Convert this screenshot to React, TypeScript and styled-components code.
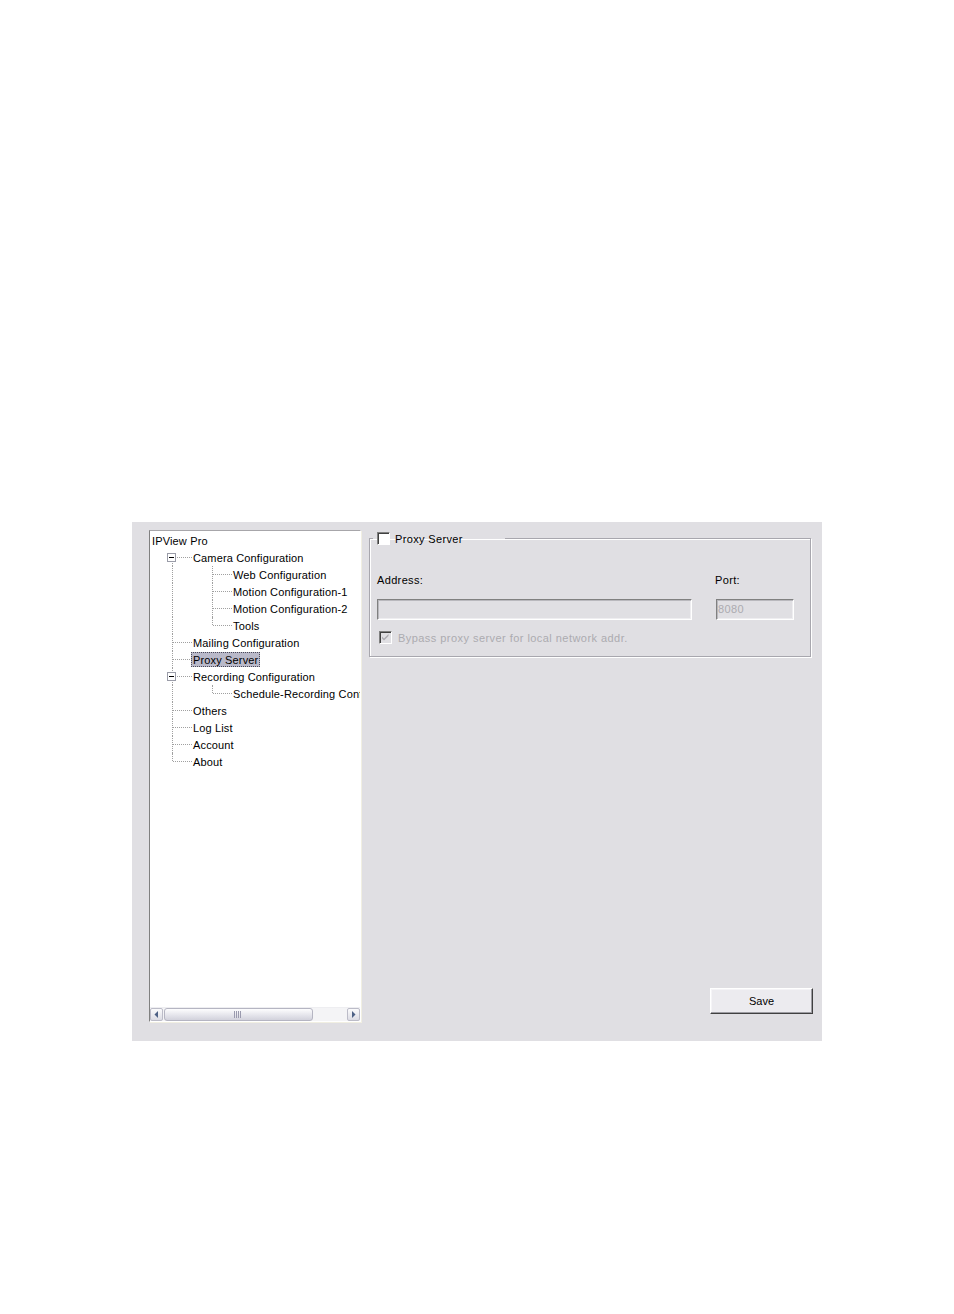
import React, { ReactElement } from 'react'
import styled, { createGlobalStyle, css } from 'styled-components';

const GlobalStyle = createGlobalStyle`
    html, body {
        margin : 0;
        padding : 0;
        background-color : #ffffff;
    }
    body {
        font-family : "Liberation Sans", Arial, sans-serif;
        font-size : 11px;
        color : #000000;
    }
`;

const StyledPage = styled.div ` 
    width : 954px;
    height : 1314px;
    padding-top : 522px;
    padding-left : 132px;
    box-sizing : border-box;
`;

const StyledPanel = styled.div ` 
    display : flex;
    flex-direction : row;
    gap : 8px;
    width : 690px;
    height : 519px;
    box-sizing : border-box;
    padding : 8px 10px 19px 17px;
    background-color : #e0dfe3;
`;

/* ---------- tree ---------- */

const StyledTreeBox = styled.div ` 
    display : flex;
    flex-direction : column;
    width : 212px;
    height : 492px;
    box-sizing : border-box;
    background-color : #ffffff;
    border-top : 1px solid #a7a6aa;
    border-left : 1px solid #808080;
    border-right : 1px solid #ffffff;
    border-bottom : 1px solid #ffffff;
    box-shadow : 1px 1px 0 #f1efe2;
`;

const StyledTreeList = styled.div ` 
    flex : 1;
    padding-top : 1px;
    overflow : hidden;
    white-space : nowrap;
    letter-spacing : 0.15px;
`;

const StyledRow = styled.div<{ $indent : number }> ` 
    display : flex;
    flex-direction : row;
    align-items : center;
    height : 17px;
    padding-left : ${p => p.$indent}px;
`;

type VLine = 'full' | 'top' | 'bottom' | 'none';

const dotted = '1px dotted #a0a0a0';

const StyledGuide = styled.div<{ $w : number, $v : VLine, $h : boolean }> ` 
    position : relative;
    flex : none;
    width : ${p => p.$w}px;
    height : 17px;

    &::before {
        content : '';
        position : absolute;
        left : 10px;
        border-left : ${dotted};
        ${p => p.$v === 'none' && css`display : none;`}
        top : ${p => (p.$v === 'bottom' ? 8 : 0)}px;
        bottom : ${p => (p.$v === 'top' ? 9 : 0)}px;
    }

    &::after {
        content : '';
        position : absolute;
        left : 11px;
        top : 8px;
        width : 19px;
        border-top : ${dotted};
        ${p => !p.$h && css`display : none;`}
    }
`;

const StyledExpander = styled.div ` 
    position : absolute;
    z-index : 1;
    left : 5px;
    top : 4px;
    width : 9px;
    height : 9px;
    box-sizing : border-box;
    border : 1px solid #9a9ca8;
    background-color : #ffffff;

    &::after {
        content : '';
        position : absolute;
        left : 1px;
        top : 3px;
        width : 5px;
        border-top : 1px solid #000000;
    }
`;

const StyledLabel = styled.span<{ $selected? : boolean }> ` 
    display : inline-block;
    height : 15px;
    line-height : 14px;
    padding : 0 1px;
    margin-left : -1px;
    box-sizing : border-box;
    border : 1px solid transparent;
    ${p => p.$selected && css`
        background-color : #b9b9c9;
        border : 1px dotted #4a4a58;
    `}
`;

const StyledRootLabel = styled(StyledLabel) ` 
    margin-left : 0;
    padding-left : 0;
`;

/* ---------- scrollbar ---------- */

const StyledScrollBar = styled.div ` 
    display : flex;
    flex-direction : row;
    height : 13px;
    background-color : #f4f4f6;
    border-top : 1px solid #eeeef1;
`;

const StyledArrowButton = styled.div ` 
    display : flex;
    align-items : center;
    justify-content : center;
    width : 13px;
    height : 13px;
    box-sizing : border-box;
    border : 1px solid #bcbcc8;
    border-radius : 2px;
    background : linear-gradient(#fbfbfc, #dcdce4);
`;

const StyledThumb = styled.div ` 
    display : flex;
    align-items : center;
    justify-content : center;
    width : 149px;
    height : 13px;
    margin-left : 1px;
    box-sizing : border-box;
    border : 1px solid #b5b5c2;
    border-radius : 3px;
    background : linear-gradient(#fdfdfe, #e3e3ea 60%, #d2d2dc);
`;

const StyledTrack = styled.div ` 
    flex : 1;
`;

/* ---------- right side ---------- */

const StyledContent = styled.div ` 
    display : flex;
    flex-direction : column;
    flex : 1;
    padding-bottom : 8px;
`;

const StyledFieldset = styled.fieldset ` 
    margin : 2px 2px 0 0;
    padding : 0 16px 12px 7px;
    min-width : 0;
    height : 125px;
    box-sizing : border-box;
    border : 1px solid #a8a7ae;
    box-shadow : 1px 1px 0 #ffffff, inset 1px 1px 0 #ffffff;
    letter-spacing : 0.35px;
`;

const StyledLegend = styled.legend ` 
    display : flex;
    flex-direction : row;
    align-items : center;
    gap : 5px;
    width : 132px;
    box-sizing : border-box;
    margin-left : -4px;
    padding : 0 0 0 4px;
`;

const StyledCheckBox = styled.span<{ $checked? : boolean, $disabled? : boolean }> ` 
    position : relative;
    display : inline-block;
    flex : none;
    width : 13px;
    height : 13px;
    box-sizing : border-box;
    border-top : 1px solid #808080;
    border-left : 1px solid #808080;
    border-right : 1px solid #ffffff;
    border-bottom : 1px solid #ffffff;
    box-shadow : inset 1px 1px 0 #404040;
    background-color : ${p => (p.$disabled ? '#e0dfe3' : '#ffffff')};
`;

const StyledFields = styled.div ` 
    display : grid;
    grid-template-columns : 315px 78px;
    column-gap : 24px;
    row-gap : 12px;
    margin-top : 29px;
`;

const StyledFieldLabel = styled.div<{ $shift? : number }> ` 
    height : 13px;
    line-height : 13px;
    margin-left : ${p => p.$shift || 0}px;
`;

const StyledInput = styled.div<{ $shift? : number }> ` 
    height : 21px;
    box-sizing : border-box;
    padding : 3px 1px;
    margin-left : ${p => p.$shift || 0}px;
    border-top : 1px solid #808080;
    border-left : 1px solid #808080;
    border-right : 1px solid #ffffff;
    border-bottom : 1px solid #ffffff;
    box-shadow : inset 1px 1px 0 #b9b8bd, inset -1px -1px 0 #eeedf0;
    background-color : #e0dfe3;
    color : #acabb0;
    line-height : 13px;
`;

const StyledCheckRow = styled.div ` 
    display : flex;
    flex-direction : row;
    align-items : center;
    gap : 6px;
    margin-top : 11px;
    margin-left : 2px;
    color : #acabb0;
    letter-spacing : 0.45px;
`;

const StyledSaveButton = styled.button ` 
    align-self : flex-end;
    margin-top : auto;
    width : 103px;
    height : 26px;
    box-sizing : border-box;
    padding : 0;
    font-family : inherit;
    font-size : 11px;
    color : #000000;
    background-color : #ecebef;
    border-top : 1px solid #ffffff;
    border-left : 1px solid #ffffff;
    border-right : 1px solid #404040;
    border-bottom : 1px solid #404040;
    box-shadow : inset -1px -1px 0 #9d9ca2, inset 1px 1px 0 #f5f4f7;
`;

interface TreeItem {
    label : string;
    level : number;
    guides? : { w : number, v : VLine, h : boolean, exp? : boolean }[];
    selected? : boolean;
}

const items : TreeItem[] = [
    { label : 'IPView Pro', level : 0 },
    { label : 'Camera Configuration', level : 1, guides : [{ w : 30, v : 'bottom', h : true, exp : true }] },
    { label : 'Web Configuration', level : 2, guides : [{ w : 40, v : 'full', h : false }, { w : 30, v : 'full', h : true }] },
    { label : 'Motion Configuration-1', level : 2, guides : [{ w : 40, v : 'full', h : false }, { w : 30, v : 'full', h : true }] },
    { label : 'Motion Configuration-2', level : 2, guides : [{ w : 40, v : 'full', h : false }, { w : 30, v : 'full', h : true }] },
    { label : 'Tools', level : 2, guides : [{ w : 40, v : 'full', h : false }, { w : 30, v : 'top', h : true }] },
    { label : 'Mailing Configuration', level : 1, guides : [{ w : 30, v : 'full', h : true }] },
    { label : 'Proxy Server', level : 1, guides : [{ w : 30, v : 'full', h : true }], selected : true },
    { label : 'Recording Configuration', level : 1, guides : [{ w : 30, v : 'full', h : true, exp : true }] },
    { label : 'Schedule-Recording Configuration', level : 2, guides : [{ w : 40, v : 'full', h : false }, { w : 30, v : 'top', h : true }] },
    { label : 'Others', level : 1, guides : [{ w : 30, v : 'full', h : true }] },
    { label : 'Log List', level : 1, guides : [{ w : 30, v : 'full', h : true }] },
    { label : 'Account', level : 1, guides : [{ w : 30, v : 'full', h : true }] },
    { label : 'About', level : 1, guides : [{ w : 30, v : 'top', h : true }] },
];

function CheckMark(): ReactElement {
    return (
        <svg width="11" height="11" viewBox="0 0 11 11" style={{ position : 'absolute', left : 0, top : 0 }}>
            <path d="M2 4.5 L4 6.5 L8.5 2 L8.5 4 L4 8.5 L2 6.5 Z" fill="#acabb0" />
        </svg>
    )
}

function ArrowIcon({ dir }: { dir : 'left' | 'right' }): ReactElement {
    return (
        <svg width="5" height="7" viewBox="0 0 5 7">
            {dir === 'left'
                ? <path d="M4 0 L0.5 3.5 L4 7 Z" fill="#4d6185" />
                : <path d="M1 0 L4.5 3.5 L1 7 Z" fill="#4d6185" />}
        </svg>
    )
}

function Grip(): ReactElement {
    return (
        <svg width="9" height="7" viewBox="0 0 9 7">
            {[0, 2, 4, 6].map(x => <rect key={x} x={x} y="0" width="1" height="7" fill="#9a9aae" />)}
        </svg>
    )
}

function Tree(): ReactElement {
    return (
        <StyledTreeBox>
            <StyledTreeList>
            {
                items.map(item => (
                    <StyledRow key={item.label} $indent={item.level === 0 ? 1 : 12}>
                        {item.guides && item.guides.map((g, i) => (
                            <StyledGuide key={i} $w={g.w} $v={g.v} $h={g.h}>
                                {g.exp && <StyledExpander />}
                            </StyledGuide>
                        ))}
                        {item.level === 0
                            ? <StyledRootLabel>{item.label}</StyledRootLabel>
                            : <StyledLabel $selected={item.selected}>{item.label}</StyledLabel>}
                    </StyledRow>
                ))
            }
            </StyledTreeList>
            <StyledScrollBar>
                <StyledArrowButton><ArrowIcon dir="left" /></StyledArrowButton>
                <StyledThumb><Grip /></StyledThumb>
                <StyledTrack />
                <StyledArrowButton><ArrowIcon dir="right" /></StyledArrowButton>
            </StyledScrollBar>
        </StyledTreeBox>
    )
}

function ProxySettings(): ReactElement {
    return (
        <StyledContent>
            <StyledFieldset>
                <StyledLegend>
                    <StyledCheckBox />
                    Proxy Server
                </StyledLegend>
                <StyledFields>
                    <StyledFieldLabel>Address:</StyledFieldLabel>
                    <StyledFieldLabel $shift={-1}>Port:</StyledFieldLabel>
                    <StyledInput />
                    <StyledInput>8080</StyledInput>
                </StyledFields>
                <StyledCheckRow>
                    <StyledCheckBox $checked $disabled><CheckMark /></StyledCheckBox>
                    Bypass proxy server for local network addr.
                </StyledCheckRow>
            </StyledFieldset>
            <StyledSaveButton>Save</StyledSaveButton>
        </StyledContent>
    )
}

export default function App(): ReactElement {
    return (
        <StyledPage>
            <GlobalStyle />
            <StyledPanel>
                <Tree />
                <ProxySettings />
            </StyledPanel>
        </StyledPage>
    )
}
